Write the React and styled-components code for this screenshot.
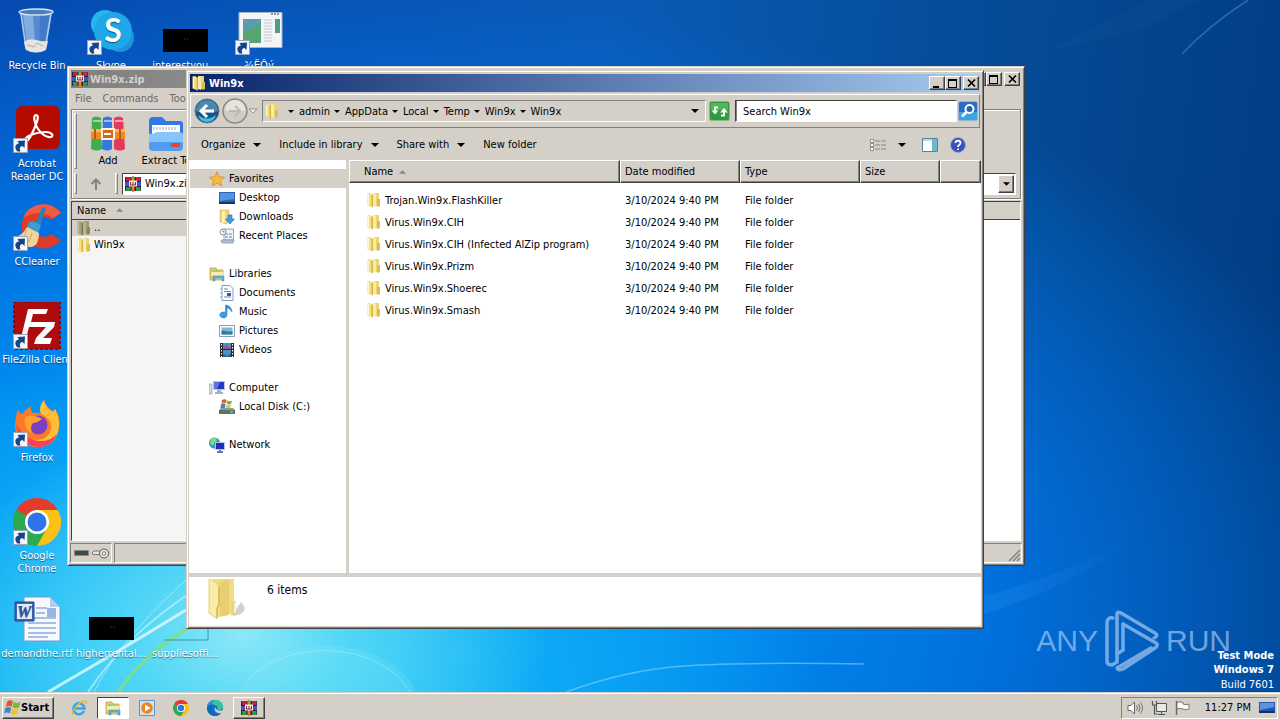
import React from 'react'
import styled, { createGlobalStyle, css } from 'styled-components'

const GlobalStyle = createGlobalStyle`
* {
  box-sizing: border-box;
}
body {
  margin: 0;
  overflow: hidden;
  font-family: 'DejaVu Sans Condensed', 'DejaVu Sans', sans-serif;
  font-size: 11px;
  line-height: 13px;
  color: #000;
}
button, input, select {
  font: inherit;
  color: inherit;
  margin: 0;
  padding: 0;
  border: none;
  background: none;
}
a {
  color: inherit;
  text-decoration: none;
}
svg {
  display: block;
  flex: none;
}
`

const raised = css`
border: 1px solid;
border-color: #fff #404040 #404040 #fff;
box-shadow: inset -1px -1px #808080;
background: #d4d0c8;
`
const sunken = css`
border: 1px solid;
border-color: #808080 #fff #fff #808080;
`

/* ---------- desktop ---------- */

const Screen = styled.div`
display: flex;
flex-direction: column;
height: 100vh;
`
const Desktop = styled.main`
flex: 1;
position: relative;
overflow: hidden;
background:
  radial-gradient(ellipse 24% 32% at 19% 92%, rgba(140, 232, 246, 1) 0%, rgba(90, 218, 246, 0.85) 35%, rgba(30, 190, 250, 0) 100%),
  radial-gradient(ellipse 46% 50% at 18% 100%, rgba(40, 205, 246, 1) 0%, rgba(20, 180, 246, 0.7) 50%, rgba(0, 160, 250, 0) 100%),
  radial-gradient(ellipse 94% 92% at 18% 88%, #00a4fa 0%, #0090f2 34%, rgba(0, 118, 232, 0.85) 64%, rgba(0, 80, 190, 0) 100%),
  linear-gradient(97deg, #0646ac 0%, #0a5ab6 45%, #044a94 76%, #003a80 100%);
`
const Wallpaper = styled.svg`
position: absolute;
width: 100%;
height: 100%;
`
const IconGrid = styled.div`
position: relative;
display: grid;
grid-template-columns: repeat(4, 74px);
grid-auto-rows: 98px;
`
const Shortcut = styled.button`
grid-column: ${p => p.$col};
grid-row: ${p => p.$row};
display: flex;
flex-direction: column;
align-items: center;
justify-content: flex-start;
padding-top: 8px;
color: #fff;
text-shadow: 0 1px 1px rgba(0, 20, 60, 0.6);
`
const Picture = styled.span`
position: relative;
height: 51px;
`
const Arrow = styled.svg`
position: absolute;
left: 0;
bottom: 4px;
`
const Label = styled.span`
white-space: pre;
`
const Watermark = styled.div`
position: absolute;
right: 49px;
bottom: 20px;
display: flex;
align-items: center;
gap: 6px;
font-family: 'Liberation Sans', sans-serif;
font-size: 30px;
line-height: 30px;
color: rgba(190, 215, 250, 0.6);
`
const BuildInfo = styled.div`
position: absolute;
right: 6px;
bottom: 0;
text-align: right;
line-height: 14px;
color: #fff;
p {
  margin: 1px 0 0;
}
`

/* ---------- windows ---------- */

const Window = styled.section`
position: absolute;
left: ${p => p.$left}px;
right: ${p => p.$right}px;
top: ${p => p.$top}px;
bottom: ${p => p.$bottom}px;
display: flex;
flex-direction: column;
padding: 2px;
border: 1px solid;
border-color: #d4d0c8 #404040 #404040 #d4d0c8;
box-shadow: inset 1px 1px #fff, inset -1px -1px #808080;
background: #d4d0c8;
`
const TitleBar = styled.header`
display: flex;
align-items: center;
gap: 2px;
height: 18px;
margin: 1px;
padding: 0 1px;
background: ${p => p.$active ? 'linear-gradient(90deg, #0a246a, #a6caf0)' : 'linear-gradient(90deg, #808080, #d4d0c8)'};
color: ${p => p.$active ? '#fff' : '#d4d0c8'};
`
const Title = styled.h1`
flex: 1;
margin: 0;
font-size: 11px;
font-weight: bold;
`
const Caption = styled.button`
${raised}
display: grid;
place-items: center;
width: 16px;
height: 14px;
margin-left: ${p => p.$apart ? '0' : '-2px'};
`

/* ---------- archiver ---------- */

const MenuBar = styled.nav`
display: flex;
gap: 11px;
padding: 3px 5px;
color: #6c6a66;
`
const Rebar = styled.div`
display: flex;
flex-direction: column;
margin: 1px;
border: 1px solid #808080;
box-shadow: inset 1px 1px #fff, 1px 1px #fff;
padding: 1px 4px 2px 2px;
`
const Band = styled.div`
display: flex;
align-items: center;
gap: 4px;
height: ${p => p.$tall ? '60px' : '25px'};
`
const Gripper = styled.span`
width: 3px;
align-self: stretch;
margin: 2px 0;
border: 1px solid;
border-color: #fff #808080 #808080 #fff;
`
const Tool = styled.button`
display: flex;
flex-direction: column;
align-items: center;
gap: 2px;
width: 54px;
white-space: nowrap;
`
const UpButton = styled.button`
width: 30px;
display: grid;
place-items: center;
`
const PathBox = styled.div`
flex: 1;
display: flex;
align-items: center;
gap: 4px;
height: 22px;
padding: 0 0 0 2px;
border: 1px solid;
border-color: #404040 #fff #fff #404040;
background: #fff;
`
const DropButton = styled.button`
${raised}
display: grid;
place-items: center;
width: 16px;
height: 18px;
margin: 0 1px 0 auto;
`
const ArchiveList = styled.div`
flex: 1;
margin: 1px;
border: 1px solid;
border-color: #404040 #fff #fff #404040;
background: linear-gradient(90deg, #f5f5f5 800px, #fff 800px);
`
const ArchiveTable = styled.table`
width: 100%;
border-collapse: collapse;
th {
  height: 17px;
  padding: 0 5px;
  border-bottom: 1px solid #404040;
  background: #d4d0c8;
  text-align: left;
  font-weight: normal;
}
td {
  height: 17px;
  padding: 0 4px;
}
tr:first-child td {
  background: linear-gradient(90deg, #d4d0c8 800px, #fff 800px);
}
`
const Inline = styled.span`
display: flex;
align-items: center;
gap: ${p => p.$gap}px;
`
const LastButton = styled.button`
margin-left: auto;
`
const StatusBar = styled.footer`
display: flex;
gap: 2px;
height: 20px;
margin-top: 1px;
`
const StatusPanel = styled.span`
${sunken}
display: flex;
align-items: center;
justify-content: ${p => p.$grow ? 'flex-end' : 'center'};
gap: 3px;
flex: ${p => p.$grow ? '1' : '0 0 42px'};
`

/* ---------- explorer ---------- */

const AddressBar = styled.div`
display: flex;
align-items: center;
height: 34px;
margin: 1px;
padding: 0 1px 0 3px;
border: 1px solid;
border-color: #fff #808080 #808080 #fff;
`
const Crumbs = styled.div`
${sunken}
flex: 1;
display: flex;
align-items: center;
gap: 4px;
height: 22px;
margin-left: 4px;
padding: 0 6px 0 1px;
button {
  display: flex;
  align-items: center;
  gap: 5px;
}
`
const SearchBox = styled.input`
width: 222px;
height: 22px;
margin: 0 1px 0 5px;
padding: 0 7px;
border: 1px solid;
border-color: #404040 #fff #fff #404040;
box-shadow: inset 1px 0 #808080;
background: #fff;
&::placeholder {
  color: #000;
  opacity: 1;
}
`
const CommandBar = styled.div`
display: flex;
align-items: center;
gap: 18px;
height: 31px;
padding: 0 15px 0 12px;
button {
  display: flex;
  align-items: center;
  gap: 8px;
}
`
const Views = styled.div`
display: flex;
align-items: center;
gap: 12px;
margin-left: auto;
`
const Panes = styled.div`
flex: 1;
display: flex;
gap: 3px;
min-height: 0;
`
const Sidebar = styled.nav`
width: 157px;
padding: 9px 0 0 1px;
background: #fff;
`
const Group = styled.ul`
list-style: none;
margin: 0 0 19px;
padding: 0;
`
const Place = styled.a`
display: flex;
align-items: center;
gap: 4px;
height: 19px;
padding-left: ${p => p.$child ? '29px' : '19px'};
background: ${p => p.$selected ? '#d4d0c8' : 'none'};
`
const Listing = styled.div`
flex: 1;
background: #fff;
`
const FileTable = styled.table`
width: 100%;
table-layout: fixed;
border-collapse: separate;
border-spacing: 0;
th {
  height: 23px;
  padding: 0 4px;
  border: 1px solid;
  border-color: #fff #404040 #404040 #fff;
  box-shadow: inset -1px -1px #808080;
  background: #d4d0c8;
  text-align: left;
  font-weight: normal;
}
th:first-child {
  padding-left: 14px;
}
tbody::before {
  content: '';
  display: block;
  height: 6px;
}
td {
  height: 22px;
  padding: 0 5px;
  white-space: nowrap;
}
td:first-child {
  padding-left: 17px;
}
`
const Details = styled.footer`
display: flex;
align-items: flex-start;
gap: 20px;
height: 49px;
margin-top: 4px;
padding: 1px 18px 0;
background: #fff;
font-size: 12px;
p {
  margin: 6px 0 0;
}
`

/* ---------- taskbar ---------- */

const Taskbar = styled.footer`
display: flex;
align-items: center;
height: 28px;
padding: 2px 2px 0;
border-top: 1px solid #d4d0c8;
box-shadow: inset 0 1px #fff;
background: #d4d0c8;
`
const StartButton = styled.button`
${raised}
display: flex;
align-items: center;
width: 52px;
height: 22px;
padding-left: 1px;
margin-right: 8px;
font-weight: bold;
`
const TaskButton = styled.button`
display: grid;
place-items: center;
width: 32px;
height: 22px;
margin: 0 1px;
${p => p.$kind === 'open' && raised}
${p => p.$kind === 'pressed' && css`
border: 1px solid;
border-color: #404040 #fff #fff #404040;
background: #fff;
`}
`
const Tray = styled.div`
${sunken}
display: flex;
align-items: center;
gap: 8px;
height: 22px;
margin-left: auto;
padding: 0 2px 0 5px;
time {
  margin-left: 6px;
}
`

/* ---------- icons ---------- */

const Down = ({ size = 7, color = '#000' }) => (
  <svg width={size} height={Math.ceil(size / 2)} viewBox="0 0 8 4"><path d="M0 0h8L4 4z" fill={color} /></svg>
)

const SortUp = () => (
  <svg width="7" height="4" viewBox="0 0 8 4"><path d="M0 4h8L4 0z" fill="#8a8780" /></svg>
)

const Folder = ({ size = 16, dim }) => (
  <svg width={size} height={size} viewBox="0 0 16 16">
    <path d="M7 1h6v10l-1 3H7z" fill={dim ? '#a09a70' : '#ecd470'} />
    <path d="M11 7h3v7l-3 1z" fill={dim ? '#8c8660' : '#dcbe50'} />
    <path d="M7 1l3 1v13l-3-1z" fill={dim ? '#b8b28c' : '#f8ecac'} />
    <path d="M1.500 1.500L4 1l3 2v12.500l-5.500-2z" fill={dim ? '#aaa47c' : '#f3df86'} />
    <path d="M5.500 2L7 3v12.500l-1.500-1z" fill={dim ? '#7c7650' : '#d4b444'} />
    <path d="M2.500 2v11" stroke={dim ? '#c4bea0' : '#fdf8d0'} />
  </svg>
)

const BigFolder = () => (
  <svg width="40" height="44" viewBox="0 0 40 44">
    <path d="M26 36l8-12q5 5 3 9t-11 5z" fill="#777" opacity=".35" />
    <path d="M5 1h22v32l-5 4-12 2z" fill="#f0dc86" />
    <path d="M13 4l9-3v36l-9 2z" fill="#e3c762" opacity=".6" />
    <path d="M25 24l4-1v12l-5 3z" fill="#ecd477" />
    <path d="M27 25l2-1v10l-2 1z" fill="#fbf3c4" />
    <path d="M2 1l8 4 2 4v18l-2 3v11L2 35z" fill="#f9eda8" stroke="#dcc05e" strokeWidth=".7" />
    <path d="M12 9v18l-2 3v10" fill="none" stroke="#c9a540" />
  </svg>
)

const Rar = ({ size = 16 }) => (
  <svg width={size} height={size} viewBox="0 0 16 16">
    <path d="M0 1h16v14H0z" fill="#30203a" />
    <path d="M1 1h4.500v4H1z" fill="#b8224a" />
    <path d="M6 1h4v4H6z" fill="#2c9c40" />
    <path d="M11 1h4.500v4H11z" fill="#c42844" />
    <path d="M0 6h16v4H0z" fill="#3b58c8" />
    <path d="M1 11h4.500v4H1z" fill="#2f9a3c" />
    <path d="M6 11h4v4H6z" fill="#bc2c3c" />
    <path d="M11 11h4.500v4H11z" fill="#2d9c3c" />
    <path d="M7 0h2v16H7z" fill="#d8822c" />
    <path d="M4 4.500h8v6H4z" fill="#f3e8de" />
    <path d="M5.500 6v3h5V6M8 6v3" fill="none" stroke="#a02030" />
  </svg>
)

const RarBooks = () => (
  <svg width="36" height="36" viewBox="0 0 36 36">
    <path d="M2 2q4-3 9 0l1 31q-5 3-11 0z" fill="#3fae4c" />
    <path d="M13 2q5-3 9 0v31q-5 3-10 0z" fill="#3478e0" />
    <path d="M24 2q5-3 9 0l2 31q-5 3-11 0z" fill="#e23a5c" />
    <path d="M3 5h8M14 5h8M25 5h8" stroke="#fff" strokeWidth="2" opacity=".5" />
    <path d="M1 13h34v10H1z" fill="#f08a24" />
    <path d="M1 13h34v3H1z" fill="#ffb850" />
    <path d="M11 12h14v12H11z" fill="#fff2e0" />
    <path d="M13 14h10v8H13z" fill="#d8651c" />
    <path d="M14 18h7" stroke="#fff" strokeWidth="2" />
    <path d="M5 13v10M30 13v10" stroke="#b85a10" strokeWidth="2" />
  </svg>
)

const ExtractIcon = () => (
  <svg width="36" height="36" viewBox="0 0 36 36">
    <path d="M1 5q0-4 4-4h9l4 4h14q3 0 3 3v10H1z" fill="#3478e6" />
    <path d="M4 9h28v10H4z" fill="#fff" />
    <path d="M6 11v3M9 11v3M12 11v3M15 11v3M18 11v3M21 11v3M24 11v3M27 11v3" stroke="#9aa8b8" />
    <path d="M1 18q5 0 8-2h22q4 0 4 3v12q0 4-4 4H5q-4 0-4-4z" fill="#86c4fa" />
    <path d="M1 26h34v5q0 4-4 4H5q-4 0-4-4z" fill="#4f9cf0" />
    <path d="M23 27h9v4h-9z" fill="#e44434" />
  </svg>
)

const ShortcutArrow = () => (
  <Arrow width="15" height="15" viewBox="0 0 15 15">
    <path d="M.5.500h14v14H.5z" fill="#f3f6fa" stroke="#9aa4b4" />
    <path d="M4.500 13.500C1 10 2 6 6 5.500L4.500 3l7.500-.5L11.500 10 9.500 8C6.500 8.500 6.500 11 7.500 13.500z" fill="#174488" />
  </Arrow>
)

const ChromeLogo = ({ size = 48 }) => (
  <svg width={size} height={size} viewBox="0 0 48 48">
    <path d="M24 24L3.200 12A24 24 0 0 1 44.800 12z" fill="#e33b2e" />
    <path d="M24 24L44.800 12A24 24 0 0 1 24 48z" fill="#fbc116" />
    <path d="M24 24V48A24 24 0 0 1 3.200 12z" fill="#2da94f" />
    <path d="M24 12h20.800L34 30 24 48z" fill="#fbc116" />
    <path d="M3.200 12L14 30l10 18 10-18z" fill="#2da94f" />
    <circle cx="24" cy="24" r="12" fill="#fff" />
    <circle cx="24" cy="24" r="9.500" fill="#2f74e8" />
  </svg>
)

const EdgeLogo = () => (
  <svg width="16" height="16" viewBox="0 0 16 16">
    <circle cx="8" cy="8" r="8" fill="#1573c8" />
    <path d="M0 8C0 3 4 0 8 0c5 0 8 3 8 6.500 0 3-3 4-6 3 1-1 1-4-2-4.500C4 4.500 1 6 0 8z" fill="#35c6a0" />
    <path d="M0 8C0 3 3 0 8 0 5 2 4 4 8 5 4 4.500 1 6 0 8z" fill="#2398d8" />
    <path d="M0 8c1-3 4-4.500 7-3-3 1-3 6 1 8 2 1 4.500.5 6-1-1 3-4 4-6 4-5 0-8-4-8-8z" fill="#1267bd" />
    <path d="M8.500 6.500c-1 2 1.500 4.500 6 4l1.500-.5v3l-3 .2C8.500 13.500 6.500 9.500 8.500 6.500z" fill="#d4d0c8" />
  </svg>
)

const IeLogo = () => (
  <svg width="16" height="16" viewBox="0 0 16 16">
    <path d="M13 11a5.500 5.500 0 1 1 .5-2.500H4" fill="none" stroke="#35a6e6" strokeWidth="2.600" />
    <path d="M2 15C-1 12 8 1 14 1c2 0 1.500 2 1 3" fill="none" stroke="#e8b830" strokeWidth="1.400" />
  </svg>
)

const MediaIcon = () => (
  <svg width="16" height="16" viewBox="0 0 16 16">
    <path d="M.5.500h15v15H.5z" fill="#cfe4f6" stroke="#5c96cc" />
    <circle cx="8" cy="8" r="5.800" fill="#f08418" />
    <path d="M6 4.500v7L11.500 8z" fill="#fff" />
  </svg>
)

const LibraryIcon = ({ size = 16 }) => (
  <svg width={size} height={size} viewBox="0 0 16 16">
    <path d="M1 2h6l1 2h6v10H1z" fill="#e8cd6c" stroke="#b9973a" strokeWidth=".7" />
    <path d="M3 4h8v4H3z" fill="#9ad07c" />
    <path d="M2 6h12v4H2z" fill="#f7ebae" />
    <path d="M4 15v-5h11v5h-2v-3H6v3z" fill="#5fb4dc" stroke="#3a86b4" strokeWidth=".5" />
  </svg>
)

const Flag = ({ size = 17 }) => (
  <svg width={size} height={size} viewBox="0 0 16 16">
    <path d="M3 2.500c2-2 4-1.500 5.300-.3L7 7.500c-2-1.200-3.500-1.200-5.500 0z" fill="#e8542a" />
    <path d="M9 2.700c2 1.300 4 1.300 6.500 0L14 8c-2 1-4 1-6.200-.3z" fill="#78b83c" />
    <path d="M1.300 8.500c2-1.200 3.600-1.200 5.500 0l-1.300 5c-2-1.200-3.500-1.200-5.500 0z" fill="#3c86d8" />
    <path d="M7.600 8.800c2 1.200 3.800 1.200 6.200.2l-1.500 5.200c-2 1-4 .8-6-.4z" fill="#f4c22c" />
  </svg>
)

const placeArt = {
  star: <path d="M8 .8l2.200 4.900 5.300.6-4 3.500 1.200 5.200L8 12.300 3.300 15l1.200-5.200-4-3.500 5.300-.6z" fill="#f8b83a" stroke="#d88418" strokeWidth=".7" />,
  desktop: (
    <>
      <path d="M0 2h16v11H0z" fill="#2b62b8" />
      <path d="M1 3h14v6L1 11z" fill="#5694dc" />
      <path d="M0 12h16v2H0z" fill="#1c3460" />
    </>
  ),
  downloads: (
    <>
      <path d="M1 1h9v12l-3 2-6-2z" fill="#eed47a" stroke="#cda940" strokeWidth=".5" />
      <path d="M3 2h3v12H3z" fill="#fbf0b4" />
      <path d="M9 6h4v4h2.500L11 15 6.500 10H9z" fill="#3c9ce8" stroke="#1c6cb8" strokeWidth=".6" />
    </>
  ),
  recent: (
    <>
      <path d="M5 1h9.500v11H5z" fill="#eef3f8" stroke="#7c8ea4" strokeWidth=".8" />
      <path d="M2 12h13l-1 3H3z" fill="#b8c4d2" stroke="#7c8ea4" strokeWidth=".7" />
      <path d="M6 6h3M10 6h3M6 9h3M10 9h3" stroke="#6884a8" strokeWidth="1.200" />
      <circle cx="4" cy="4" r="3" fill="#fff" stroke="#7c8ea4" />
      <path d="M4 2.500V4h1.500" fill="none" stroke="#444" strokeWidth=".7" />
    </>
  ),
  documents: (
    <>
      <path d="M3 .5h8l3 3v12H3z" fill="#fff" stroke="#7c93b4" strokeWidth=".9" />
      <path d="M5 4h4M5 6.500h7M5 12h7" stroke="#5c88c8" />
      <path d="M8 8h4v3H8z" fill="#3c5c9c" />
      <path d="M1 4h2M1 8h2M1 12h2" stroke="#8ca4c4" />
    </>
  ),
  music: <path d="M8 1v9.500A3.600 3 0 1 1 6.500 8.500V1c4 1 6 2 6.500 7-1.500-2.500-3-3.500-5-4z" fill="#3a9ee6" stroke="#1b6fbc" strokeWidth=".5" />,
  pictures: (
    <>
      <path d="M.5 2.500h15v11H.5z" fill="#fff" stroke="#8aa0b8" />
      <path d="M2.500 4.500h11v7h-11z" fill="#74bcd8" />
      <path d="M2.500 8c4-1 7 2 11 0v3.500h-11z" fill="#2f7c90" />
    </>
  ),
  videos: (
    <>
      <path d="M1 1h14v14H1z" fill="#242c38" />
      <path d="M4 1h8v6H4zM4 8h8v7H4z" fill="#4c90c4" />
      <path d="M4 5l4-2 4 3v1H4z" fill="#8c5c94" />
      <path d="M4 12l4 2 4-3v4H4z" fill="#2c6498" />
      <path d="M2.500 2v13M13.500 2v13" stroke="#fff" strokeDasharray="1.500 1.500" />
    </>
  ),
  computer: (
    <>
      <path d="M0 4h3v10H0z" fill="#d4d8e0" stroke="#868e9c" strokeWidth=".6" />
      <path d="M4 1h12v9H4z" fill="#b8c4e0" />
      <path d="M5 2h10v7H5z" fill="#2438c0" />
      <path d="M5 2h6L8 9H5z" fill="#5c74e8" />
      <path d="M8 10h4v2h2v2H6v-2h2z" fill="#a4aec4" />
    </>
  ),
  disk: (
    <>
      <path d="M2 9h12l2 2v4H0v-4z" fill="#8c9a9c" />
      <path d="M0 11h16v4H0z" fill="#5c706c" />
      <path d="M11 12h3v1.500h-3z" fill="#5ce060" />
      <path d="M3 1c2-1 3-1 4.500 0L7 4c-2-.8-3-.8-4.500 0z" fill="#e0582c" />
      <path d="M8.500 1.500c2 .8 3 .8 4.500 0L12 5c-2 .6-3 .6-4.500-.4z" fill="#74b43c" />
      <path d="M2 5c2-1 3-1 4.500 0L6 9H1.500z" fill="#3c84d4" />
      <path d="M7.500 5.500c2 .8 3 .8 4.500 0L11 9H7z" fill="#f0c030" />
    </>
  ),
  network: (
    <>
      <circle cx="5.500" cy="6" r="5.500" fill="#3098b0" />
      <path d="M2 2c3-2 6-1 6 1s-3 1-3 4-3 1-4-1z" fill="#7cd890" />
      <path d="M6 5h10v8H6z" fill="#b8c4e0" />
      <path d="M7 6h8v6H7z" fill="#1c30c0" />
      <path d="M10 13h2v1h2v2H8v-2h2z" fill="#6c7c9c" />
    </>
  )
}

const PlaceIcon = ({ name }) => (
  <svg width="16" height="16" viewBox="0 0 16 16">{placeArt[name]}</svg>
)

const desktopArt = {
  bin: (
    <svg width="48" height="48" viewBox="0 0 48 48">
      <path d="M7 4l6 38q10 5 20 0l6-38z" fill="#7cabe2" opacity=".65" />
      <path d="M10 6h10l2 30-8 2z" fill="#dceaf8" opacity=".35" />
      <path d="M27 8l9 0-4 28-6 2z" fill="#2c62b8" opacity=".4" />
      <path d="M8 6l5 35M38 6l-6 35" stroke="#d8e8f8" strokeWidth="1.500" opacity=".7" />
      <path d="M11 34q5-4 12-2t12 1l-2 9q-10 5-20 0z" fill="#e6e4e0" />
      <path d="M14 37l7 2 3-4 6 3" fill="none" stroke="#b4aea4" />
      <ellipse cx="23" cy="4" rx="17" ry="3" fill="#4a7ec0" stroke="#d6e2ee" strokeWidth="1.300" />
    </svg>
  ),
  skype: (
    <svg width="48" height="48" viewBox="0 0 48 48">
      <circle cx="18" cy="16" r="14" fill="#28b4ee" />
      <circle cx="33" cy="30" r="14" fill="#1c94dc" />
      <circle cx="26" cy="23" r="19" fill="#1fa8e8" />
      <text x="26" y="34" textAnchor="middle" fontFamily="Lato, sans-serif" fontWeight="bold" fontSize="32" fill="#fff">S</text>
    </svg>
  ),
  black: (
    <svg width="48" height="48" viewBox="0 0 48 48">
      <path d="M2 21h45v23H2z" fill="#000" />
      <path d="M23 31h6" stroke="#2c2c2c" strokeDasharray="2 1" />
    </svg>
  ),
  blank: (
    <svg width="48" height="48" viewBox="0 0 48 48">
      <path d="M3 44h44V21" fill="none" stroke="#3c94a8" />
      <path d="M20 32h8" stroke="#7cb8cc" strokeDasharray="2 1" />
    </svg>
  ),
  app: (
    <svg width="48" height="48" viewBox="0 0 48 48">
      <path d="M4 4.500h43v35H4z" fill="#f4f5f6" stroke="#a8b4c0" />
      <path d="M36 6h9" stroke="#8898a8" strokeWidth="2" strokeDasharray="2 1" />
      <path d="M8 11h18v24H8z" fill="#5c9cb0" />
      <path d="M8 24l18-8v19H8z" fill="#58a470" />
      <path d="M29 12h8M29 15h8M29 18h8M29 21h8M29 24h8M29 27h8M29 30h8M29 33h8" stroke="#c4c8cc" />
      <path d="M40 11h5v14h-5z" fill="#4c9c88" />
    </svg>
  ),
  acrobat: (
    <svg width="48" height="48" viewBox="0 0 48 48">
      <rect x="3" y="0" width="44" height="43" rx="6" fill="#b30b00" />
      <path d="M23 9c-3 0-2 8 2 14s10 9 13 8 1-5-5-5-16 2-20 6-2 5 0 4 6-8 9-15 4-12 1-12z" fill="none" stroke="#fff" strokeWidth="2.200" />
    </svg>
  ),
  ccleaner: (
    <svg width="48" height="48" viewBox="0 0 48 48">
      <path d="M48 9A22 22 0 1 0 48 36L38 30A10 10 0 1 1 38 16z" fill="#dc3c28" />
      <path d="M48 9A22 22 0 0 0 10 14q16-10 30 0z" fill="#f05c40" />
      <path d="M29 3l4 1-6 19-5-2z" fill="#2c80bc" />
      <path d="M16 18q7-2 12 4l-3 7-11-5z" fill="#3c9cd4" />
      <path d="M14 23l12 6q0 12-7 14Q8 44 2 33q8-2 12-10z" fill="#f0d49c" />
      <path d="M14 26q-2 6-6 9M19 29q-1 6-5 11" fill="none" stroke="#d0a868" />
    </svg>
  ),
  filezilla: (
    <svg width="48" height="48" viewBox="0 0 48 48">
      <path d="M1 0h46v47H1z" fill="#b00c10" stroke="#8c0810" strokeWidth="2" strokeDasharray="3 2" />
      <path d="M15 7h20l-2 5H20l-2 8h11l-2 5H16l-4 15H7z" fill="#fff" />
      <path d="M25 20h17l-1 5-11 11h9l-2 6H21l2-6 10-11h-9z" fill="#fff" />
    </svg>
  ),
  firefox: (
    <svg width="48" height="48" viewBox="0 0 48 48">
      <path d="M5 9q1 4 4 5 4-5 9-8-1 5 2 7 4-1 8 1l3-14q3 8 9 11l2-2q6 9 4 18-3 19-22 20Q5 46 2 28 2 17 5 9z" fill="#fb7a28" />
      <path d="M31 0q-6 7-3 14 11 4 10 15-3 11-14 11Q10 40 5 30q4 17 20 17 19-1 21-20 1-9-4-18l-2 3q-8-4-9-12z" fill="#ffbe38" />
      <path d="M3 24q3 22 22 23 14 0 19-13-7 8-18 7Q12 40 3 24z" fill="#f4405c" />
      <circle cx="25" cy="25" r="9.500" fill="#7b3fc4" />
      <path d="M12 17q8-4 17 2-5 4-9 4-4 4 0 11-10-4-8-17z" fill="#fca030" />
    </svg>
  ),
  chrome: <ChromeLogo />,
  word: (
    <svg width="48" height="48" viewBox="0 0 48 48">
      <path d="M11 1h26l10 10v34H11z" fill="#f6f9fe" stroke="#7c98cc" />
      <path d="M37 1v10h10z" fill="#bccce8" />
      <path d="M23 12h11M23 17h9M15 22h28M15 27h28M15 32h28M15 37h28M15 41h20" stroke="#90acd8" strokeWidth="1.300" />
      <path d="M34 12h9v9h-9z" fill="#9cb4e0" />
      <path d="M2 6h19v19H2z" fill="#3a64b4" stroke="#24448c" />
      <path d="M4 8h15v15H4z" fill="#e4ecf8" />
      <text x="11" y="21" textAnchor="middle" fontFamily="Liberation Serif, serif" fontStyle="italic" fontWeight="bold" fontSize="16" fill="#2c509c">W</text>
    </svg>
  )
}

/* ---------- data ---------- */

const shortcuts = [
  { label: 'Recycle Bin', art: 'bin', col: 1, row: 1 },
  { label: 'Skype', art: 'skype', col: 2, row: 1, link: true },
  { label: 'interestyou...', art: 'black', col: 3, row: 1 },
  { label: '¾ËÔý', art: 'app', col: 4, row: 1, link: true },
  { label: 'Acrobat\nReader DC', art: 'acrobat', col: 1, row: 2, link: true },
  { label: 'CCleaner', art: 'ccleaner', col: 1, row: 3, link: true },
  { label: 'FileZilla Client', art: 'filezilla', col: 1, row: 4, link: true },
  { label: 'Firefox', art: 'firefox', col: 1, row: 5, link: true },
  { label: 'Google\nChrome', art: 'chrome', col: 1, row: 6, link: true },
  { label: 'demandthe.rtf', art: 'word', col: 1, row: 7 },
  { label: 'higherrental...', art: 'black', col: 2, row: 7 },
  { label: 'suppliesoffi...', art: 'blank', col: 3, row: 7 }
]

const places = [
  { label: 'Favorites', icon: 'star', selected: true, items: [['Desktop', 'desktop'], ['Downloads', 'downloads'], ['Recent Places', 'recent']] },
  { label: 'Libraries', icon: 'library', items: [['Documents', 'documents'], ['Music', 'music'], ['Pictures', 'pictures'], ['Videos', 'videos']] },
  { label: 'Computer', icon: 'computer', items: [['Local Disk (C:)', 'disk']] },
  { label: 'Network', icon: 'network', items: [] }
]

const files = [
  'Trojan.Win9x.FlashKiller',
  'Virus.Win9x.CIH',
  'Virus.Win9x.CIH (Infected AlZip program)',
  'Virus.Win9x.Prizm',
  'Virus.Win9x.Shoerec',
  'Virus.Win9x.Smash'
]

const crumbs = ['admin', 'AppData', 'Local', 'Temp', 'Win9x', 'Win9x']

/* ---------- parts ---------- */

const CaptionButtons = () => (
  <>
    <Caption aria-label="Minimize">
      <svg width="10" height="9" viewBox="0 0 10 9"><path d="M1 7h6v2H1z" /></svg>
    </Caption>
    <Caption aria-label="Maximize">
      <svg width="10" height="9" viewBox="0 0 10 9"><path d="M0 0h9v9H0zM1 2v6h7V2z" fillRule="evenodd" /></svg>
    </Caption>
    <Caption $apart aria-label="Close">
      <svg width="9" height="8" viewBox="0 0 9 8"><path d="M1 .5l7 7M8 .5l-7 7" stroke="#000" strokeWidth="1.600" /></svg>
    </Caption>
  </>
)

const Archiver = () => (
  <Window $left={67} $right={255} $top={66} $bottom={126}>
    <TitleBar>
      <Rar />
      <Title>Win9x.zip</Title>
      <CaptionButtons />
    </TitleBar>
    <MenuBar>
      <button>File</button>
      <button>Commands</button>
      <button>Tools</button>
    </MenuBar>
    <Rebar>
      <Band $tall>
        <Gripper />
        <Tool><RarBooks />Add</Tool>
        <Tool><ExtractIcon />Extract To</Tool>
      </Band>
      <Band>
        <Gripper />
        <UpButton aria-label="Up">
          <svg width="12" height="12" viewBox="0 0 12 12"><path d="M6 12V2M1.500 6L6 1.500 10.500 6" fill="none" stroke="#808080" strokeWidth="2" /></svg>
        </UpButton>
        <Gripper />
        <PathBox>
          <Rar />
          Win9x.zip
          <DropButton aria-label="History"><Down /></DropButton>
        </PathBox>
      </Band>
    </Rebar>
    <ArchiveList>
      <ArchiveTable>
        <thead>
          <tr><th><Inline $gap={10}>Name <SortUp /></Inline></th></tr>
        </thead>
        <tbody>
          <tr><td><Inline $gap={2}><Folder dim />..</Inline></td></tr>
          <tr><td><Inline $gap={2}><Folder />Win9x</Inline></td></tr>
        </tbody>
      </ArchiveTable>
    </ArchiveList>
    <StatusBar>
      <StatusPanel>
        <svg width="15" height="6" viewBox="0 0 15 6"><path d="M.5.500h14v5H.5z" fill="#3c4c48" stroke="#888" /></svg>
        <svg width="17" height="11" viewBox="0 0 17 11">
          <path d="M9 3H2L0 5l2 2 2-1 1 1 2-1 2 2z" fill="#e8e8e4" stroke="#555" strokeWidth=".8" />
          <circle cx="12" cy="5.500" r="4.500" fill="#e8e8e4" stroke="#555" />
          <circle cx="12" cy="5.500" r="1.800" fill="#fff" stroke="#555" strokeWidth=".8" />
        </svg>
      </StatusPanel>
      <StatusPanel $grow>
        <svg width="13" height="17" viewBox="0 0 13 17"><path d="M1 16L12 5M5 16l7-7M9 16l3-3" stroke="#808080" strokeWidth="1.500" /></svg>
      </StatusPanel>
    </StatusBar>
  </Window>
)

const Explorer = () => (
  <Window $left={186} $right={296} $top={70} $bottom={63}>
    <TitleBar $active>
      <Folder />
      <Title>Win9x</Title>
      <CaptionButtons />
    </TitleBar>
    <AddressBar>
      <button aria-label="Back">
        <svg width="26" height="26" viewBox="0 0 26 26">
          <circle cx="13" cy="13" r="12" fill="#1a5484" stroke="#6c7884" />
          <path d="M2 13a11 11 0 0 1 22 0q-11 4-22 0z" fill="#4c88ac" />
          <path d="M4 17q9 7 18 0-2 7-9 7t-9-7z" fill="#38c0e8" />
          <path d="M20 13H8M13 7l-6 6 6 6" fill="none" stroke="#fff" strokeWidth="3" />
        </svg>
      </button>
      <button aria-label="Forward">
        <svg width="28" height="26" viewBox="0 0 28 26">
          <circle cx="15" cy="13" r="12" fill="#cfccc6" stroke="#8c8984" strokeWidth="1.500" />
          <path d="M5 12a10 10 0 0 1 20 0q-10 4-20 0z" fill="#e6e4e0" />
          <path d="M9 13h11M15 8l5 5-5 5" fill="none" stroke="#bcb9b3" strokeWidth="2" />
        </svg>
      </button>
      <button aria-label="Recent pages">
        <svg width="10" height="6" viewBox="0 0 10 6"><path d="M1 1h8L5 5z" fill="#f2f0ec" stroke="#808080" strokeWidth=".8" /></svg>
      </button>
      <Crumbs>
        <Folder />
        <span />
        {crumbs.map((name, i) => (
          <button key={i}><Down size={6} />{name}</button>
        ))}
        <LastButton aria-label="Previous locations"><Down size={8} /></LastButton>
      </Crumbs>
      <button aria-label="Refresh">
        <svg width="24" height="20" viewBox="0 0 24 20">
          <rect x="3.500" y=".5" width="20" height="19" rx="2" fill="#2c9c3c" stroke="#8cb890" />
          <path d="M5 2h17v7H5z" fill="#6cc870" opacity=".6" />
          <path d="M5.500 9.500h7L9 13.500zM14 11.500h8l-4-4.500z" fill="#fff" />
          <path d="M9 10V6.500h3M18 11v3.500h-3" fill="none" stroke="#fff" strokeWidth="2" />
        </svg>
      </button>
      <SearchBox placeholder="Search Win9x" aria-label="Search Win9x" />
      <button aria-label="Search">
        <svg width="20" height="20" viewBox="0 0 20 20">
          <rect x=".5" y=".5" width="19" height="19" rx="2" fill="#2a6cc8" stroke="#9cb4d4" />
          <path d="M1 11h18v8H1z" fill="#38a4e4" />
          <circle cx="11.500" cy="8" r="4" fill="#2a62b8" stroke="#fff" strokeWidth="2" />
          <path d="M8.500 11L4 15.500" stroke="#fff" strokeWidth="2.600" />
        </svg>
      </button>
    </AddressBar>
    <CommandBar>
      <button>Organize <Down size={8} /></button>
      <button>Include in library <Down size={8} /></button>
      <button>Share with <Down size={8} /></button>
      <button>New folder</button>
      <Views>
        <button aria-label="Change view">
          <svg width="16" height="12" viewBox="0 0 16 12">
            <path d="M.5.500h3v3h-3zM.5 4.500h3v3h-3zM.5 8.500h3v3h-3z" fill="#fff" stroke="#777" strokeWidth=".8" />
            <path d="M5 2h5M11 2h5M5 6h5M11 6h5M5 10h5M11 10h5" stroke="#888" />
          </svg>
        </button>
        <button aria-label="View options"><Down size={8} /></button>
        <button aria-label="Preview pane">
          <svg width="20" height="14" viewBox="0 0 20 14">
            <path d="M4.500.5h15v13h-15z" fill="#fff" stroke="#4c84a8" />
            <path d="M14 1h5v12h-5z" fill="#6cb8cc" />
            <path d="M5 2h14" stroke="#7cb4d0" />
          </svg>
        </button>
        <button aria-label="Help">
          <svg width="16" height="16" viewBox="0 0 16 16">
            <circle cx="8" cy="8" r="7.500" fill="#3854b8" stroke="#98a8d4" />
            <path d="M5.500 6C5.500 3 10.500 3 10.500 6 10.500 8 8 7.500 8 10M8 11.500v1.500" fill="none" stroke="#fff" strokeWidth="1.800" />
          </svg>
        </button>
      </Views>
    </CommandBar>
    <Panes>
      <Sidebar>
        {places.map(group => (
          <Group key={group.label}>
            <li>
              <Place href="#" $selected={group.selected}>
                {group.icon === 'library' ? <LibraryIcon /> : <PlaceIcon name={group.icon} />}
                {group.label}
              </Place>
            </li>
            {group.items.map(([label, icon]) => (
              <li key={label}>
                <Place href="#" $child><PlaceIcon name={icon} />{label}</Place>
              </li>
            ))}
          </Group>
        ))}
      </Sidebar>
      <Listing>
        <FileTable>
          <colgroup>
            <col width="271" />
            <col width="120" />
            <col width="120" />
            <col width="80" />
            <col />
          </colgroup>
          <thead>
            <tr>
              <th><Inline $gap={6}>Name <SortUp /></Inline></th>
              <th>Date modified</th>
              <th>Type</th>
              <th>Size</th>
              <th />
            </tr>
          </thead>
          <tbody>
            {files.map(name => (
              <tr key={name}>
                <td><Inline $gap={3}><Folder />{name}</Inline></td>
                <td>3/10/2024 9:40 PM</td>
                <td>File folder</td>
                <td />
                <td />
              </tr>
            ))}
          </tbody>
        </FileTable>
      </Listing>
    </Panes>
    <Details>
      <BigFolder />
      <p>6 items</p>
    </Details>
  </Window>
)

const App = () => {
  return (
    <Screen>
      <GlobalStyle />
      <Desktop>
        <Wallpaper viewBox="0 0 1280 692" preserveAspectRatio="none" fill="none">
          <defs>
            <linearGradient id="beam" x1="0" y1="0" x2="1" y2="0">
              <stop offset="0" stopColor="#3ca0ff" stopOpacity=".2" />
              <stop offset="1" stopColor="#3ca0ff" stopOpacity="0" />
            </linearGradient>
          </defs>
          <path d="M1150 0L1050 50l90-20 60-30z" fill="#4c88b8" opacity=".06" />
          <path d="M1248 0q-40 26-66 54" stroke="#5c94cc" strokeWidth="1.500" opacity=".5" />
          <path d="M984 596q80-20 150-60v4q-70 50-150 74z" fill="url(#beam)" />
          <path d="M238 692a92 62 0 0 1 178 0z" fill="#8cecf8" opacity=".18" />
          <path d="M248 680a92 66 0 0 1 162 12" stroke="#b4f4fa" opacity=".45" />
          <path d="M48 692q70-40 138-82" stroke="#e0fbff" strokeWidth="3" opacity=".8" />
          <path d="M88 692q40-60 110-104" stroke="#c8f6ff" strokeWidth="2" opacity=".6" />
          <path d="M94 692q30-60 104-122" stroke="#c8f6ff" opacity=".6" />
          <path d="M118 692q30-42 74-66" stroke="#84e070" strokeWidth="3" opacity=".85" />
          <path d="M566 692q60-22 118-26t180-2" stroke="#9ce0ff" strokeWidth="1.500" opacity=".5" />
        </Wallpaper>
        <IconGrid>
          {shortcuts.map(s => (
            <Shortcut key={s.label} $col={s.col} $row={s.row}>
              <Picture>
                {desktopArt[s.art]}
                {s.link && <ShortcutArrow />}
              </Picture>
              <Label>{s.label}</Label>
            </Shortcut>
          ))}
        </IconGrid>
        <Watermark>
          <span>ANY</span>
          <svg width="56" height="62" viewBox="0 0 56 62" fill="none" stroke="#a4c8f4" strokeWidth="3.500" strokeLinejoin="round" strokeLinecap="round" opacity=".7">
            <path d="M9 8q-6-1-6 5v38q0 4 5 4l5-3V4q0-3 4-1l34 20q4 3-1 5" />
            <path d="M19 14l33 19q3 2-1 5L19 59q-5 2-6-1l34-20" />
            <path d="M13 44l6-4" />
            <path d="M19 14v26" />
          </svg>
          <span>RUN</span>
        </Watermark>
        <BuildInfo>
          <strong>Test Mode<br />Windows 7</strong>
          <p>Build 7601</p>
        </BuildInfo>
        <Archiver />
        <Explorer />
      </Desktop>
      <Taskbar>
        <StartButton><Flag />Start</StartButton>
        <TaskButton aria-label="Internet Explorer"><IeLogo /></TaskButton>
        <TaskButton $kind="pressed" aria-label="Windows Explorer"><LibraryIcon /></TaskButton>
        <TaskButton aria-label="Media Player"><MediaIcon /></TaskButton>
        <TaskButton aria-label="Chrome"><ChromeLogo size={16} /></TaskButton>
        <TaskButton aria-label="Edge"><EdgeLogo /></TaskButton>
        <TaskButton $kind="open" aria-label="WinRAR"><Rar /></TaskButton>
        <Tray>
          <svg width="16" height="14" viewBox="0 0 16 14">
            <path d="M1 4.500h3L7.500 1v12L4 9.500H1z" fill="#fff" stroke="#666" />
            <path d="M9.500 4.500q2 2.500 0 5M11.500 3q3 4 0 8M13.500 1.500q4 5.500 0 11" fill="none" stroke="#777" />
          </svg>
          <svg width="16" height="16" viewBox="0 0 16 16">
            <path d="M5.500 3.500h10v8h-10z" fill="#e8e8e4" stroke="#555" />
            <path d="M7 14.500h7M10.500 12v2" stroke="#555" />
            <path d="M1.500 1v4h4V1M3.500 5v9h3" fill="none" stroke="#555" strokeWidth="1.200" />
          </svg>
          <svg width="16" height="14" viewBox="0 0 16 14">
            <path d="M1.500 0v14" stroke="#666" strokeWidth="1.400" />
            <path d="M2 1.500q3-1.500 6 0v1.500q3 1.500 6 0v5q-3 1.500-6 0-3-1-6 0z" fill="#fff" stroke="#777" />
          </svg>
          <time>11:27 PM</time>
          <svg width="16" height="14" viewBox="0 0 16 14">
            <path d="M0 1h16v10H0z" fill="#1f58b8" />
            <path d="M1 2h14v4L1 9z" fill="#5c94e0" />
            <path d="M0 10h16v2H0z" fill="#18305c" />
          </svg>
        </Tray>
      </Taskbar>
    </Screen>
  )
}

export default App
